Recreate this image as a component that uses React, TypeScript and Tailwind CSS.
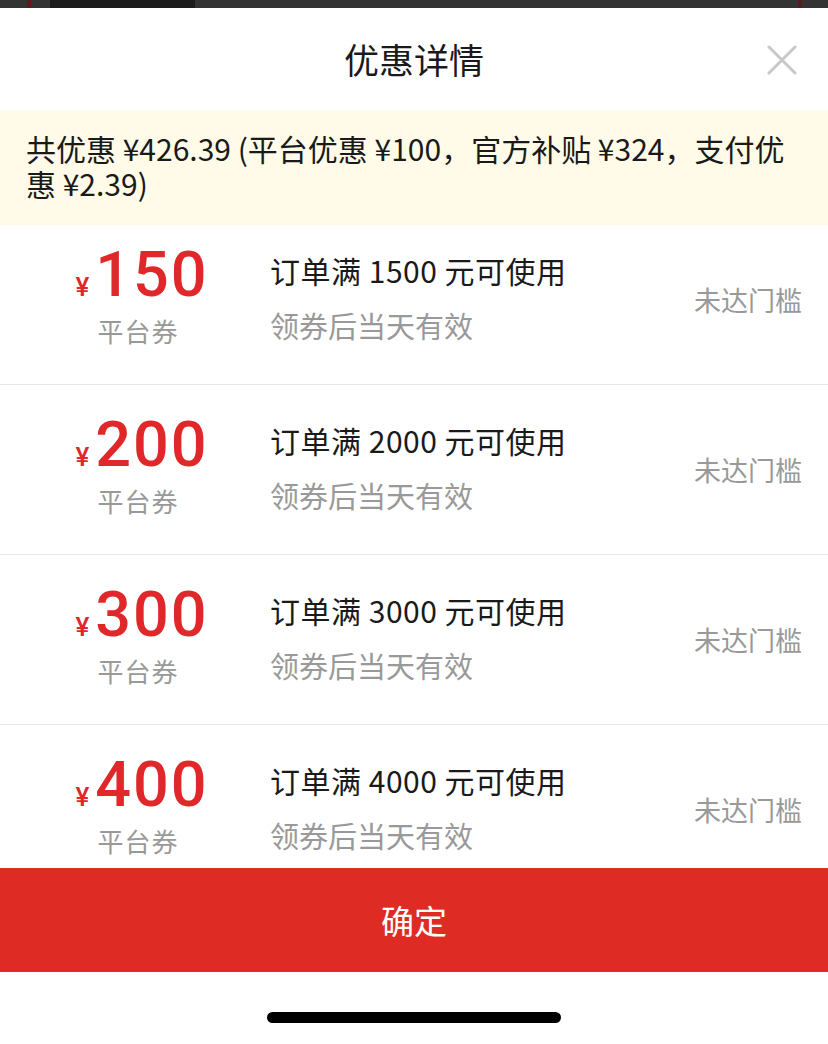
import React from "react";

const coupons = [
  { amount: "150", threshold: "1500" },
  { amount: "200", threshold: "2000" },
  { amount: "300", threshold: "3000" },
  { amount: "400", threshold: "4000" },
];

const cjk = { fontFamily: '"Noto Sans CJK SC", "Noto Sans", sans-serif' };
const num = { fontFamily: 'Roboto, "Liberation Sans", Arial, sans-serif' };

export default function App() {
  return (
    <div className="w-[828px] h-[1044px] bg-white flex flex-col overflow-hidden" style={cjk}>
      {/* top dark strip */}
      <div className="h-[8px] flex bg-[#333]">
        <div className="w-[27px]" />
        <div className="w-[4px] bg-[#5a1a1e]" />
        <div className="w-[19px]" />
        <div className="w-[145px] bg-[#1c1c1c]" />
        <div className="flex-1" />
        <div className="w-[4px] bg-[#5a1a1e]" />
        <div className="w-[26px]" />
      </div>
      {/* header */}
      <div className="h-[102px] relative flex items-center justify-center">
        <span className="text-[35px] text-[#1a1a1a] leading-none -mt-[2px]">优惠详情</span>
        <svg className="absolute left-[767px] top-[37px]" width="30" height="30" viewBox="0 0 30 30">
          <path d="M2 2 L28 28 M28 2 L2 28" stroke="#c8c8c8" strokeWidth="3" strokeLinecap="round" />
        </svg>
      </div>
      {/* banner */}
      <div className="h-[115px] bg-[#fffbe8] pl-[26px] pt-[21px] text-[30px] leading-[35px] text-[#1a1a1a]">
        <div>共优惠 ¥426.39 (平台优惠 ¥100，官方补贴 ¥324，支付优</div>
        <div>惠 ¥2.39)</div>
      </div>
      {/* list */}
      <div className="h-[643px] overflow-hidden">
        <div className="-mt-[10px]">
          {coupons.map((c, i) => (
            <div key={i} className="h-[170px] flex items-start pl-[26px] border-b border-[#e6e6e6]">
              <div className="w-[224px] flex flex-col items-center pt-[34px]">
                <div className="flex items-baseline text-[#e0282a] h-[52px] pl-[8px]">
                  <span className="text-[26px] font-medium mr-[6px]" style={num}>¥</span>
                  <span className="text-[63px] font-medium leading-[52px] tracking-[2px]" style={num}>{c.amount}</span>
                </div>
                <div className="text-[26px] text-[#999] leading-none mt-[17px] tracking-[1px]">平台券</div>
              </div>
              <div className="ml-[20px] flex flex-col flex-1 pt-[39px]">
                <div className="text-[30px] leading-[32px] text-[#1a1a1a] tracking-[0.5px]">订单满 {c.threshold} 元可使用</div>
                <div className="text-[29px] leading-[32px] text-[#999] mt-[23px]">领券后当天有效</div>
              </div>
              <div className="self-center text-[27px] text-[#999] mr-[26px] leading-none">未达门槛</div>
            </div>
          ))}
        </div>
      </div>
      {/* button */}
      <div className="h-[104px] bg-[#de2b23] flex items-center justify-center">
        <span className="text-white text-[33px] leading-none">确定</span>
      </div>
      <div className="flex-1 flex items-start justify-center pt-[40px]">
        <div className="w-[294px] h-[11px] bg-black rounded-full" />
      </div>
    </div>
  );
}
